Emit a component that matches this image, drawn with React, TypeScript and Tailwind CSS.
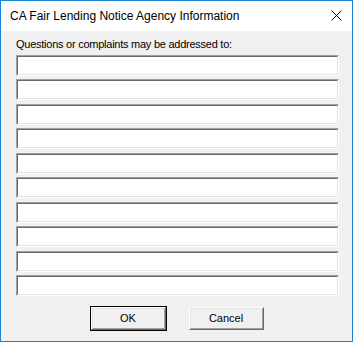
const fieldGaps = ["mt-0", "mt-[3px]", "mt-[4px]", "mt-[3px]", "mt-[4px]", "mt-[3px]", "mt-[4px]", "mt-[3px]", "mt-[4px]", "mt-[3px]"];

function SunkenField({ className }: { className: string }) {
  return (
    <div
      className={`${className} h-[21px] w-[323px] border border-t-[#a0a0a0] border-l-[#a0a0a0] border-b-white border-r-white`}
    >
      <div className="h-full w-full border border-t-[#696969] border-l-[#696969] border-b-[#e3e3e3] border-r-[#e3e3e3] bg-white" />
    </div>
  );
}

function RaisedButton({ label, isDefault }: { label: string; isDefault?: boolean }) {
  const face = (
    <div className="h-[23px] w-[75px] border border-t-white border-l-white border-b-[#696969] border-r-[#696969]">
      <div className="flex h-full w-full items-center justify-center border border-t-[#e3e3e3] border-l-[#e3e3e3] border-b-[#a0a0a0] border-r-[#a0a0a0] bg-[#f0f0f0] text-[11px] text-black">
        {label}
      </div>
    </div>
  );
  if (!isDefault) return face;
  return <div className="border border-black">{face}</div>;
}

export default function App() {
  return (
    <div
      className="flex h-[342px] w-[353px] flex-col border border-[#1883d7] bg-[#f0f0f0]"
      style={{ fontFamily: '"Liberation Sans", Arial, sans-serif' }}
    >
      <div className="flex h-[30px] items-center justify-between bg-white pl-[9px] pr-[10px]">
        <span className="text-[12px] leading-[14px] text-black">
          CA Fair Lending Notice Agency Information
        </span>
        <svg width="11" height="11" viewBox="0 0 11 11" className="mb-px">
          <path d="M0.5 0.5 L10.5 10.5 M10.5 0.5 L0.5 10.5" stroke="#000" strokeWidth="1" />
        </svg>
      </div>

      <div className="flex flex-1 flex-col px-[15px]">
        <div className="mt-[7px] mb-[4px] text-[11px] leading-[13px] tracking-[-0.25px] text-black">
          Questions or complaints may be addressed to:
        </div>
        {fieldGaps.map((g, i) => (
          <SunkenField key={i} className={g} />
        ))}
        <div className="mt-[10px] flex items-center justify-center gap-[22px]">
          <RaisedButton label="OK" isDefault />
          <RaisedButton label="Cancel" />
        </div>
      </div>
    </div>
  );
}
